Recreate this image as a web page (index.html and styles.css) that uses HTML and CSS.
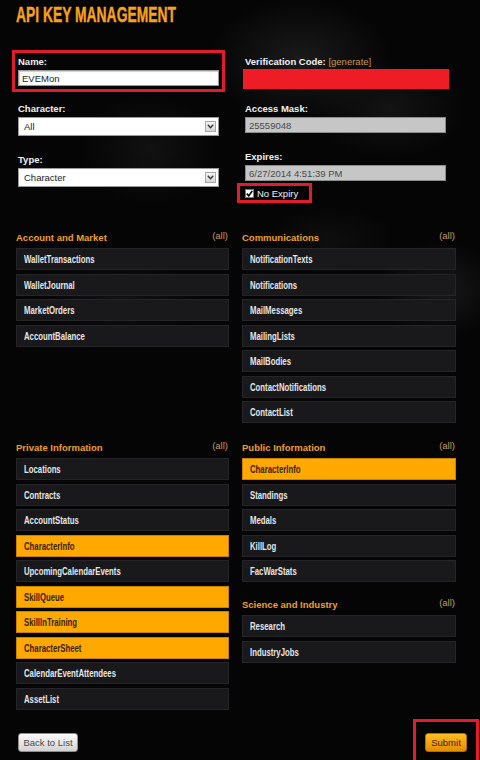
FILE: index.html
```html
<!DOCTYPE html>
<html>
<head>
<meta charset="utf-8">
<title>API Key Management</title>
<link rel="stylesheet" href="styles.css">
</head>
<body>
<div class="page">
  <h1 class="title"><span class="title-text">API KEY MANAGEMENT</span></h1>

  <div class="form">
    <div class="col">
      <div class="field hl-name">
        <div class="label">Name:</div>
        <div class="input text">EVEMon</div>
      </div>
      <div class="field mt17">
        <div class="label">Character:</div>
        <div class="input select"><span>All</span><span class="arrow"><svg width="7" height="5" viewBox="0 0 7 5"><path d="M0.8 0.8 L3.5 3.8 L6.2 0.8" fill="none" stroke="#333" stroke-width="1.3"/></svg></span></div>
      </div>
      <div class="field mt18">
        <div class="label">Type:</div>
        <div class="input select"><span>Character</span><span class="arrow"><svg width="7" height="5" viewBox="0 0 7 5"><path d="M0.8 0.8 L3.5 3.8 L6.2 0.8" fill="none" stroke="#333" stroke-width="1.3"/></svg></span></div>
      </div>
    </div>
    <div class="col">
      <div class="field">
        <div class="label label-tight">Verification Code: <span class="gen">[generate]</span></div>
        <div class="redbar"></div>
      </div>
      <div class="field mt14">
        <div class="label">Access Mask:</div>
        <div class="input gray">25559048</div>
      </div>
      <div class="field mt18">
        <div class="label">Expires:</div>
        <div class="input gray">6/27/2014 4:51:39 PM</div>
      </div>
      <div class="noexpiry">
        <span class="check"><svg width="7" height="7" viewBox="0 0 7 7"><path d="M0.8 3.6 L2.8 5.8 L6.3 0.9" fill="none" stroke="#000" stroke-width="1.6"/></svg></span>
        <span>No Expiry</span>
      </div>
    </div>
  </div>

  <div class="sections">
    <div class="section">
      <div class="sec-head"><span class="sec-title">Account and Market</span><span class="all">(all)</span></div>
      <div class="rows">
        <div class="row"><span>WalletTransactions</span></div>
        <div class="row"><span>WalletJournal</span></div>
        <div class="row"><span>MarketOrders</span></div>
        <div class="row"><span>AccountBalance</span></div>
      </div>
    </div>
    <div class="section">
      <div class="sec-head"><span class="sec-title">Communications</span><span class="all">(all)</span></div>
      <div class="rows">
        <div class="row"><span>NotificationTexts</span></div>
        <div class="row"><span>Notifications</span></div>
        <div class="row"><span>MailMessages</span></div>
        <div class="row"><span>MailingLists</span></div>
        <div class="row"><span>MailBodies</span></div>
        <div class="row"><span>ContactNotifications</span></div>
        <div class="row"><span>ContactList</span></div>
      </div>
    </div>
    <div class="section">
      <div class="sec-head"><span class="sec-title">Private Information</span><span class="all">(all)</span></div>
      <div class="rows">
        <div class="row"><span>Locations</span></div>
        <div class="row"><span>Contracts</span></div>
        <div class="row"><span>AccountStatus</span></div>
        <div class="row on"><span>CharacterInfo</span></div>
        <div class="row"><span>UpcomingCalendarEvents</span></div>
        <div class="row on"><span>SkillQueue</span></div>
        <div class="row on"><span>SkillInTraining</span></div>
        <div class="row on"><span>CharacterSheet</span></div>
        <div class="row"><span>CalendarEventAttendees</span></div>
        <div class="row"><span>AssetList</span></div>
      </div>
    </div>
    <div class="stack">
      <div class="section">
        <div class="sec-head"><span class="sec-title">Public Information</span><span class="all">(all)</span></div>
        <div class="rows">
          <div class="row on"><span>CharacterInfo</span></div>
          <div class="row"><span>Standings</span></div>
          <div class="row"><span>Medals</span></div>
          <div class="row"><span>KillLog</span></div>
          <div class="row"><span>FacWarStats</span></div>
        </div>
      </div>
      <div class="section">
        <div class="sec-head"><span class="sec-title">Science and Industry</span><span class="all">(all)</span></div>
        <div class="rows">
          <div class="row"><span>Research</span></div>
          <div class="row"><span>IndustryJobs</span></div>
        </div>
      </div>
    </div>
  </div>

  <div class="footer">
    <button class="btn back">Back to List</button>
    <div class="submit-hl"><button class="btn submit">Submit</button></div>
  </div>
</div>
</body>
</html>
```

FILE: styles.css
```css
html, body {
  margin: 0;
  padding: 0;
}
body {
  width: 480px;
  height: 760px;
  overflow: hidden;
  font-family: "Liberation Sans", Arial, sans-serif;
  font-size: 9.5px;
  color: #fff;
  background:
    radial-gradient(ellipse 130px 90px at 300px 60px, rgba(75,75,78,0.30), rgba(0,0,0,0) 70%),
    radial-gradient(ellipse 110px 70px at 390px 110px, rgba(70,70,72,0.22), rgba(0,0,0,0) 70%),
    radial-gradient(ellipse 100px 80px at 150px 150px, rgba(60,60,62,0.22), rgba(0,0,0,0) 70%),
    radial-gradient(ellipse 90px 70px at 440px 290px, rgba(70,70,72,0.30), rgba(0,0,0,0) 70%),
    radial-gradient(ellipse 120px 60px at 120px 300px, rgba(65,65,68,0.22), rgba(0,0,0,0) 70%),
    radial-gradient(ellipse 90px 50px at 330px 240px, rgba(55,55,58,0.18), rgba(0,0,0,0) 70%),
    #050505;
}
.page {
  padding-top: 4px;
}
.title {
  margin: 0 0 0 16px;
  height: 22px;
  line-height: 22px;
  font-size: 22px;
  font-weight: bold;
  font-family: "Liberation Sans", sans-serif;
  color: #f6a21b;
  white-space: nowrap;
}
.title-text {
  display: inline-block;
  transform: scaleX(0.63);
  transform-origin: left center;
  -webkit-text-stroke: 0.4px #f6a21b;
}

/* form */
.form {
  display: grid;
  grid-template-columns: 201px 201px;
  column-gap: 26px;
  padding-left: 18px;
  margin-top: 30px;
  align-items: start;
}
.col {
  display: flex;
  flex-direction: column;
}
.field {
  display: flex;
  flex-direction: column;
}
.mt14 { margin-top: 14px; }
.mt17 { margin-top: 17px; }
.mt18 { margin-top: 18px; }
.label {
  height: 12px;
  line-height: 12px;
  font-weight: bold;
  color: #f2f2f2;
  margin-bottom: 2px;
  white-space: nowrap;
}
.label-tight { margin-bottom: 1px; }
.gen {
  font-weight: normal;
  color: #c8963c;
}
.hl-name {
  outline: 3px solid #e21d2b;
  outline-offset: 3px;
}
.input {
  box-sizing: border-box;
  border: 1px solid #9a9a9a;
  color: #222;
  display: flex;
  align-items: center;
  white-space: nowrap;
}
.input.text {
  height: 16px;
  background: #fff;
  padding-left: 3px;
  box-shadow: inset 1px 1px 1px rgba(0,0,0,0.2);
}
.input.select {
  height: 19px;
  background: #fff;
  padding-left: 5px;
  justify-content: space-between;
  padding-right: 2px;
}
.arrow {
  box-sizing: border-box;
  width: 11px;
  height: 11px;
  border: 1px solid #a8a8a8;
  background: linear-gradient(#f4f4f4, #d6d6d6);
  display: flex;
  align-items: center;
  justify-content: center;
}
.input.gray {
  height: 16px;
  background: #c6c6c6;
  border-color: #8c8c8c;
  color: #4a4a4a;
  padding-left: 3px;
}
.redbar {
  height: 20px;
  margin: 0 -3px 0 -2px;
  background: #ee1c25;
}
.noexpiry {
  box-sizing: border-box;
  margin-top: 2px;
  margin-left: -8px;
  align-self: flex-start;
  height: 20px;
  border: 3px solid #e21d2b;
  padding: 0 11px 0 5px;
  display: flex;
  align-items: center;
  gap: 3px;
  color: #f0f0f0;
}
.check {
  box-sizing: border-box;
  width: 9px;
  height: 9px;
  background: #fff;
  border: 1px solid #777;
  display: flex;
  align-items: center;
  justify-content: center;
}

/* sections */
.sections {
  display: grid;
  grid-template-columns: 213px 214px;
  column-gap: 13px;
  row-gap: 17px;
  padding-left: 16px;
  margin-top: 27px;
  align-items: start;
}
.stack {
  display: flex;
  flex-direction: column;
  gap: 15px;
}
.sec-head {
  height: 14px;
  margin-bottom: 4px;
  display: flex;
  justify-content: space-between;
  align-items: center;
}
.sec-title {
  font-weight: bold;
  color: #eea01e;
}
.all {
  color: #c79a55;
  margin-top: -3px;
  margin-right: 1px;
}
.rows {
  display: flex;
  flex-direction: column;
  gap: 3.5px;
}
.row {
  box-sizing: border-box;
  height: 22px;
  line-height: 20px;
  padding-left: 7px;
  background: #19191b;
  border: 1px solid #252527;
  font-weight: bold;
  font-size: 10.5px;
  color: #e6e6e6;
  white-space: nowrap;
}
.row span {
  display: inline-block;
  transform: scaleX(0.74);
  transform-origin: left center;
}
.row.on {
  background: #fea800;
  border-color: #c98300;
  color: #3c2200;
}

/* footer */
.footer {
  margin-top: 9px;
  padding-left: 18px;
  padding-right: 1px;
  display: flex;
  justify-content: space-between;
  align-items: flex-start;
}
.btn {
  box-sizing: border-box;
  font-family: "Liberation Sans", Arial, sans-serif;
  font-size: 9.5px;
  padding: 0;
  border-radius: 3px;
  cursor: pointer;
}
.back {
  margin-top: 14px;
  width: 60px;
  height: 19px;
  background: linear-gradient(#fbfbfb, #d2d2d2);
  border: 1px solid #8e8e8e;
  color: #4a4a4a;
}
.submit-hl {
  border: 3px solid #e21d2b;
  border-bottom: none;
  padding: 11px 9px 12px 9px;
}
.submit {
  width: 42px;
  height: 19px;
  display: block;
  background: linear-gradient(#ffbe1e, #e58c00);
  border: 1px solid #b06d00;
  color: #3b2200;
}
```
